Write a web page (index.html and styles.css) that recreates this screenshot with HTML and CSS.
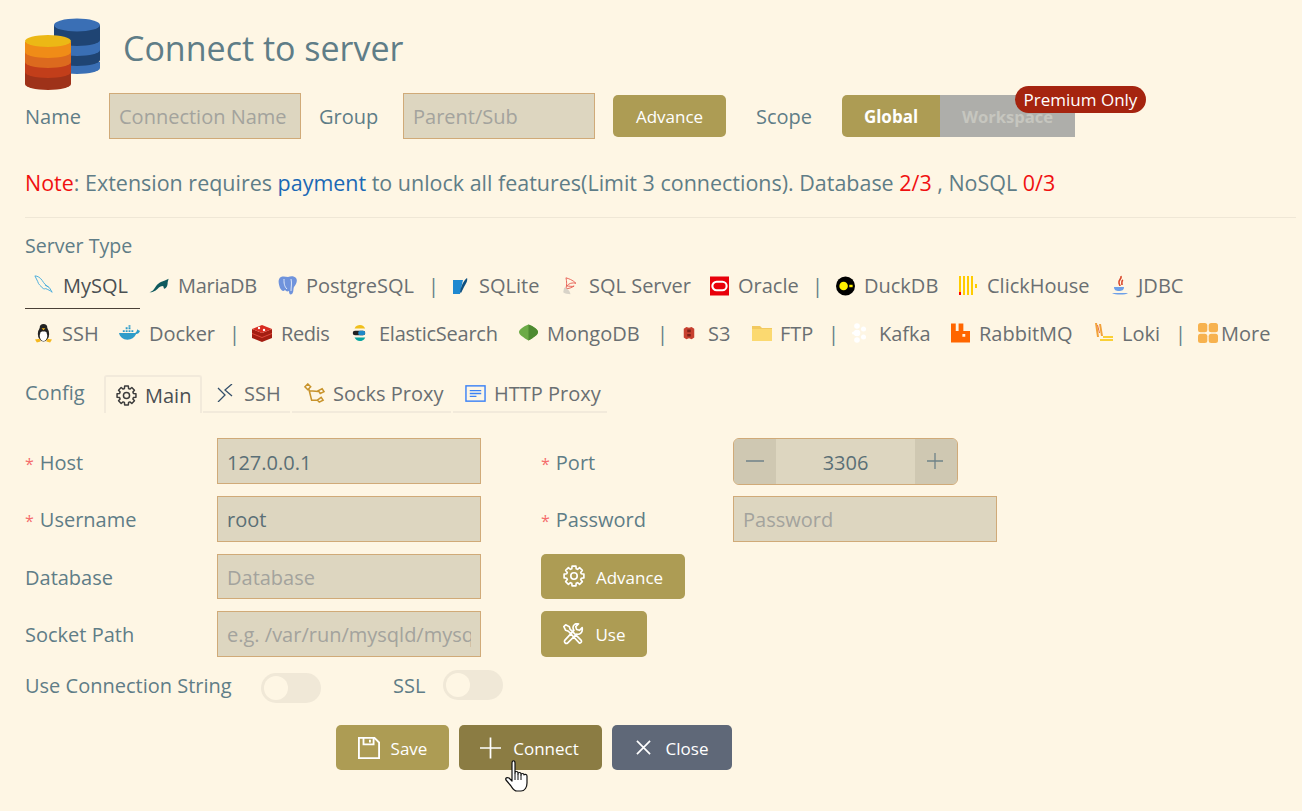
FILE: index.html
```html
<!DOCTYPE html>
<html lang="en">
<head>
<meta charset="utf-8">
<title>Connect to server</title>
<link rel="stylesheet" href="styles.css">
</head>
<body>
<main class="page">
  <header class="head">
    <svg class="logo" width="75" height="72" viewBox="0 0 75 72">
      <path fill="#3a6fb5" d="M29 44h46v6a23 6 0 0 1-46 0z"/>
      <path fill="#1f4473" d="M29 32h46v10a23 6 0 0 1-46 0z"/>
      <path fill="#3a6fb5" d="M29 22h46v10a23 6 0 0 1-46 0z"/>
      <path fill="#1f4473" d="M29 7h46v15a23 6 0 0 1-46 0z"/>
      <ellipse fill="#3a6fb5" cx="52" cy="7" rx="23" ry="6.5"/>
      <path fill="#9e3219" d="M0 54h46v12a23 6 0 0 1-46 0z"/>
      <path fill="#c23e1a" d="M0 44h46v10a23 6 0 0 1-46 0z"/>
      <path fill="#dc6a1e" d="M0 34h46v10a23 6 0 0 1-46 0z"/>
      <path fill="#f08c17" d="M0 24h46v10a23 6 0 0 1-46 0z"/>
      <ellipse fill="#ecb815" cx="23" cy="23" rx="23" ry="6"/>
    </svg>
    <h1 class="title">Connect to server</h1>
  </header>

  <div class="name-row">
    <label class="lbl lbl-name">Name</label>
    <input class="field field-top" placeholder="Connection Name">
    <label class="lbl lbl-group">Group</label>
    <input class="field field-top" placeholder="Parent/Sub">
    <button class="btn btn-top-adv">Advance</button>
    <span class="lbl lbl-scope">Scope</span>
    <div class="scope">
      <span class="seg seg-on">Global</span>
      <span class="seg seg-off">Workspace</span>
      <span class="badge">Premium Only</span>
    </div>
  </div>

  <p class="note"><span class="red">Note</span>: Extension requires <a class="pay">payment</a> to unlock all features(Limit 3 connections). Database <span class="red">2/3</span> , NoSQL <span class="red">0/3</span></p>
  <div class="rule"></div>
  <div class="section-label">Server Type</div>

  <nav class="types types-1">
    <a class="type type-active">
      <svg class="ti t22" viewBox="0 0 22 22"><path fill="none" stroke="#3fa9dc" stroke-width="1" d="M1 1c3 0 6 2 8 5 2 3 4 6 8 8l3 5c-2-2-5-3-7-4-1 0-2 1-4-1C7 11 5 11 4 7 3 5 2 3 1 1zM12 11l4 2"/></svg>MySQL</a>
    <a class="type w-maria"><svg class="ti t21" viewBox="0 0 22 22"><path fill="#0f5a5e" d="M0 18c3-1 4-2 6-5 3-5 7-7 11-8l4-2-1 4c0 3-1 7-4 7l-1-3c-3 0-4 1-6 3-3 3-6 4-9 4z"/></svg>MariaDB</a>
    <a class="type w-pg"><svg class="ti" viewBox="1 1 20 20"><path fill="#6f93dc" d="M4 2c3-1 5 0 7 0 3-1 6-1 8 1 2 3 0 6-2 9-1 2 0 5-2 7-2 1-3 0-3-3-2 1-3 0-4-1-2 2-3 1-5-2C2 10 0 4 4 2z"/><path fill="none" stroke="#dfe8f8" d="M7 4c0 4 0 7 3 10M14 4c1 4 0 8 0 12"/></svg>PostgreSQL</a>
    <span class="sep">|</span>
    <a class="type w-sqlite"><svg class="ti t16" viewBox="0 0 16 20"><path fill="#1f88d0" d="M1 4h10c-1 4-2 9-3 14H1z"/><path fill="#0d4f80" d="M15 2c1 2-1 6-3 9l-3 6-1-1c1-5 3-11 7-14z"/></svg>SQLite</a>
    <a class="type w-mssql"><svg class="ti t19" viewBox="0 0 20 22"><path fill="none" stroke="#e75a50" d="M5 2c3 1 7 2 11 6-4-1-8 0-10 3 3 0 6 1 8 0-3 2-6 3-9 3 1-4 1-8 0-12z"/><path fill="#d8d3c8" d="M3 13c3 0 6 3 7 7-3 0-6 0-8-2z"/></svg>SQL Server</a>
    <a class="type w-oracle"><svg class="ti t19" viewBox="0 0 20 20"><rect width="20" height="20" fill="#e8000b"/><rect x="2.500" y="5.500" width="15" height="9" rx="4.500" fill="none" stroke="#fff" stroke-width="2.200"/></svg>Oracle</a>
    <span class="sep">|</span>
    <a class="type w-duck"><svg class="ti t19" viewBox="0 0 20 20"><circle cx="10" cy="10" r="10" fill="#000"/><circle cx="8" cy="10" r="4.500" fill="#fff100"/><rect x="14" y="8.700" width="3.500" height="2.600" fill="#fff100"/></svg>DuckDB</a>
    <a class="type w-ch"><svg class="ti t20g9" viewBox="0 0 20 20"><path fill="#fc0" d="M1 0h2v19H1zM5 0h2v19H5zM9 0h2v19H9zM13 0h2v19h-2zM17 8h2v4h-2z"/><path fill="#f00" d="M1 16h2v3H1z"/></svg>ClickHouse</a>
    <a class="type w-jdbc"><svg class="ti t16g10" viewBox="0 0 16 22"><path fill="none" stroke="#d9472b" stroke-width="1.600" d="M9 1c1 3-3 4-2 7 0 1 1 2 1 3M11 5c-2 1-1 3-1 5"/><path fill="#6d9fe8" d="M2 12h10c0 3-2 4-5 4s-5-1-5-4zM0 18h16c-2 2-13 2-16 0z"/></svg>JDBC</a>
  </nav>

  <nav class="types types-2">
    <a class="type w-ssh"><svg class="ti t17" viewBox="0 0 18 20"><ellipse cx="9" cy="11" rx="6" ry="8" fill="#222"/><ellipse cx="9" cy="13" rx="4" ry="5.500" fill="#fff"/><circle cx="9" cy="4.500" r="4" fill="#222"/><path fill="#f5b81f" d="M7 5h4l-2 2zM0 17l5-1 1 3-4 1zM18 17l-5-1-1 3 4 1z"/></svg>SSH</a>
    <a class="type w-docker"><svg class="ti t21g9" viewBox="0 0 22 16"><path fill="#2d9cc9" d="M0 8h17c1-1 2-2 2-4 1 1 2 1 3 2-1 2-2 3-4 3-2 4-5 6-9 6-5 0-8-3-9-7z"/><path fill="#2d9cc9" d="M4 5h2v2H4zM7 5h2v2H7zM10 5h2v2h-2zM13 5h2v2h-2zM7 2h2v2H7zM10 2h2v2h-2zM10 0h2v1.500h-2z"/></svg>Docker</a>
    <span class="sep">|</span>
    <a class="type w-redis"><svg class="ti t20g9" viewBox="0 0 20 18"><path fill="#a41e11" d="M0 5l10 4 10-4v9l-10 4-10-4z"/><path fill="#d82c20" d="M0 5l10-4 10 4-10 4z"/><path fill="#e04a3c" d="M0 9l10 4 10-4v1l-10 4-10-4z"/><circle cx="7" cy="4" r="1.200" fill="#fff"/><circle cx="12" cy="6" r="1.200" fill="#fff"/></svg>Redis</a>
    <a class="type w-es"><svg class="ti t14g13" viewBox="0 0 14 18"><path fill="#f0bf1a" d="M2 4C3 1 6 0 8 0c3 0 5 2 6 4z"/><path fill="#07a5a0" d="M2 14h12c-1 3-4 4-6 4-3 0-5-2-6-4z"/><rect y="6.500" width="14" height="5" rx="2.500" fill="#222"/><rect x="6" y="6.500" width="8" height="5" rx="2.500" fill="#1e88c7"/></svg>ElasticSearch</a>
    <a class="type w-mongo"><svg class="ti t19g9" viewBox="0 0 20 20"><path fill="#6cab46" d="M10 1c5 2 10 5 10 8s-5 6-10 9C5 15 0 12 0 9s5-6 10-8z"/><path fill="#4d8a30" d="M10 1c5 2 10 5 10 8s-5 6-10 9z"/></svg>MongoDB</a>
    <span class="sep">|</span>
    <a class="type w-s3"><svg class="ti t14g12" viewBox="0 0 14 16"><path fill="#c7402f" d="M1 3l3-2 3 1 3-1 3 2v10l-3 2-3-1-3 1-3-2z"/><path fill="#7e2118" d="M5 4h4v3H5zM5 9h4v3H5z"/></svg>S3</a>
    <a class="type w-ftp"><svg class="ti" viewBox="0 0 20 16"><path fill="#f2c95f" d="M0 1h8l2 2h10v13H0z"/><path fill="#fbd970" d="M0 4h20v12H0z"/></svg>FTP</a>
    <span class="sep">|</span>
    <a class="type w-kafka"><svg class="ti t-kafka" viewBox="0 0 14 20"><g fill="#fff"><circle cx="5" cy="3" r="2.800"/><circle cx="5" cy="10" r="3.300"/><circle cx="5" cy="17" r="2.800"/><circle cx="11.500" cy="6" r="2.500"/><circle cx="11.500" cy="14" r="2.500"/><circle cx="1.500" cy="10" r="1.500"/></g></svg>Kafka</a>
    <a class="type w-rabbit"><svg class="ti t19g9" viewBox="0 0 20 20"><path fill="#f60" fill-rule="evenodd" d="M0 0h5v8h3V0h5v8h7v12H0zM12 11v3h3v-3z"/></svg>RabbitMQ</a>
    <a class="type w-loki"><svg class="ti t18g9" viewBox="0 0 18 20"><path fill="#f2a23a" d="M0 0l2 0 2 14H2zM4 1l2 0 2 12H6z"/><path fill="#e96f3d" d="M2 2l1 0 2 8H4z"/><path fill="#fad035" d="M5 16h13v2H5zM8 13h10v2H8z"/></svg>Loki</a>
    <span class="sep">|</span>
    <a class="type w-more"><svg class="ti t20g3" viewBox="0 0 20 20"><g fill="#f7b24e"><rect width="9.300" height="9.300" rx="2.500"/><rect x="10.700" width="9.300" height="9.300" rx="2.500"/><rect y="10.700" width="9.300" height="9.300" rx="2.500"/><rect x="10.700" y="10.700" width="9.300" height="9.300" rx="2.500"/></g></svg>More</a>
  </nav>

  <div class="config-row">
    <span class="lbl lbl-config">Config</span>
    <div class="tabs">
      <a class="tab tab-main"><svg class="tab-ico" viewBox="0 0 24 24" fill="none" stroke="#3c3c3c" stroke-width="1.700" stroke-linejoin="round"><use href="#gear"/></svg>Main</a>
      <a class="tab tab-ssh"><svg class="tab-ico ico-ssh" viewBox="0 0 16 18" fill="none" stroke="#35506b" stroke-width="1.300"><path d="M1 4l7 7-7 7M15 0L8 6l7 6"/></svg>SSH</a>
      <a class="tab tab-socks"><svg class="tab-ico" viewBox="0 0 22 22" fill="none" stroke="#c8932b" stroke-width="1.600"><path d="M1 4l3-3 3 3-3 3zM15 8l4-2 2 3-4 2zM14 18l4-3 2 3-4 2zM5 6l3 12h6M6 8l9 1"/></svg>Socks Proxy</a>
      <a class="tab tab-http"><svg class="tab-ico" viewBox="0 0 22 18" fill="none" stroke="#3b82f6" stroke-width="1.500"><rect x="1" y="1" width="20" height="16"/><path d="M5 6h12M5 9h12M5 12h7"/></svg>HTTP Proxy</a>
    </div>
  </div>

  <svg class="defs" width="0" height="0"><defs>
    <g id="gear"><circle cx="12" cy="12" r="3.500"/><path d="M22.800 9.900V14.100L19.900 14.400 19.300 15.900 21.100 18.100 18.100 21.100 15.900 19.300 14.400 19.900 14.100 22.800H9.900L9.600 19.900 8.100 19.300 5.900 21.100 2.900 18.100 4.700 15.900 4.100 14.400 1.200 14.100V9.900L4.100 9.600 4.700 8.100 2.900 5.900 5.900 2.900 8.100 4.700 9.600 4.100 9.900 1.200H14.100L14.400 4.100 15.900 4.700 18.100 2.900 21.100 5.900 19.300 8.100 19.900 9.600z"/></g>
  </defs></svg>

  <form class="form">
    <div class="cell-l"><label class="fl"><span class="star">*</span>Host</label><input class="field field-form val" value="127.0.0.1"></div>
    <div class="cell-r"><label class="fr"><span class="star">*</span>Port</label>
      <div class="stepper"><span class="step"><svg width="18" height="18" viewBox="0 0 18 18"><path d="M0 9h18" stroke="#6f8288" stroke-width="1.300"/></svg></span><span class="step-val">3306</span><span class="step"><svg width="18" height="18" viewBox="0 0 18 18"><path d="M0 9h16M8 1v16" stroke="#6f8288" stroke-width="1.300"/></svg></span></div>
    </div>
    <div class="cell-l"><label class="fl"><span class="star">*</span>Username</label><input class="field field-form val" value="root"></div>
    <div class="cell-r"><label class="fr"><span class="star">*</span>Password</label><input class="field field-form" placeholder="Password"></div>
    <div class="cell-l"><label class="fl">Database</label><input class="field field-form" placeholder="Database"></div>
    <div class="cell-r"><button type="button" class="btn btn-ico btn-adv"><svg class="btn-svg" viewBox="0 0 24 24" fill="none" stroke="#fff" stroke-width="1.800" stroke-linejoin="round"><use href="#gear"/></svg><span class="btn-t">Advance</span></button></div>
    <div class="cell-l"><label class="fl">Socket Path</label><input class="field field-form" placeholder="e.g. /var/run/mysqld/mysqld.sock"></div>
    <div class="cell-r"><button type="button" class="btn btn-ico btn-use"><svg class="btn-svg" viewBox="0 0 24 24" fill="none" stroke="#fff" stroke-width="1.800" stroke-linejoin="round"><path d="M2 4l2-2 4 2 1 3 12 12c1 2-1 3-2 3L7 9 4 8zM22 5l-3 3-3-1-1-3 3-3c-3-1-6 1-6 4 0 1 0 2 1 3L3 19c-1 2 1 4 3 3l10-10c3 1 7-1 6-7z"/></svg><span class="btn-t">Use</span></button></div>
  </form>

  <div class="switch-row">
    <span class="lbl lbl-conn">Use Connection String</span>
    <span class="switch sw-a"><i class="knob"></i></span>
    <span class="lbl lbl-ssl">SSL</span>
    <span class="switch sw-b"><i class="knob"></i></span>
  </div>

  <div class="actions">
    <button class="btn btn-ico btn-save"><svg class="act-svg" viewBox="0 0 24 24" fill="none" stroke="#fff" stroke-width="2"><path d="M1 1h17l5 5v17H1zM6 1v7h11V1M13 3v3"/></svg><span class="btn-t">Save</span></button>
    <button class="btn btn-ico btn-connect"><svg class="act-svg plus" viewBox="0 0 22 22" fill="none" stroke="#fff" stroke-width="1.800"><path d="M0 11h22M11 0v22"/></svg><span class="btn-t">Connect</span></button>
    <button class="btn btn-ico btn-close"><svg class="act-svg cross" viewBox="0 0 16 16" fill="none" stroke="#fff" stroke-width="1.800"><path d="M1 1l14 14M15 1L1 15"/></svg><span class="btn-t">Close</span></button>
    <svg class="cursor" width="26" height="34" viewBox="0 0 26 34"><path fill="#fff" stroke="#111" stroke-width="1.200" stroke-linejoin="round" d="M7 3c0-3 3-3 3 0v10c0-2 3-2 3 0v1c0-2 3-2 3 0v1c0-2 3-2 3 0 0-1 3-1 3 1v7c0 4-2 8-6 8h-4c-3 0-4-2-6-5l-5-6c-1-2 1-3 3-2l3 3z"/><path stroke="#111" d="M10 13v7M13 14v6M16 15v5"/></svg>
  </div>
</main>
</body>
</html>
```
FILE: styles.css
```css
* { box-sizing: border-box; }
html, body { margin: 0; padding: 0; background: #fef6e4; }
body { font-family: "Open Sans", "Noto Sans", sans-serif; font-size: 20px; color: #5f7d87; height: 811px; overflow: hidden; }
.page { padding: 18px 6px 0 25px; }
.defs { position: absolute; }

.head { display: flex; align-items: center; height: 72px; }
.logo { flex: none; }
.title { margin: 0 0 12px 23px; font-size: 34px; font-weight: 400; color: #5f7d87; line-height: 40px; }

.name-row { display: flex; align-items: center; height: 46px; margin-top: 3px; }
.lbl { color: #5f7d87; white-space: nowrap; }
.lbl-name { width: 84px; }
.lbl-group { width: 84px; margin-left: 18px; }
.lbl-scope { width: 86px; margin-left: 30px; }
.field { background: #ddd6c0; border: 1px solid #d0aa78; border-radius: 0; font: inherit; color: #5f7d87; padding: 0 9px; height: 46px; outline: none; }
.field::placeholder { color: #a3a39d; opacity: 1; }
.field-top { width: 192px; }
.btn { border: 0; background: #ad9c54; color: #fff; font: inherit; font-size: 17px; border-radius: 5px; cursor: pointer; white-space: nowrap; display: inline-flex; align-items: center; justify-content: center; padding: 0; }
.btn-top-adv { width: 113px; height: 42px; margin-left: 18px; }
.btn-t { padding-top: 2px; }

.scope { display: flex; height: 42px; position: relative; font-size: 16.600px; font-weight: 700; }
.seg { display: flex; align-items: center; justify-content: center; }
.seg-on { width: 98px; background: #ad9c54; color: #fff; border-radius: 5px 0 0 5px; font-size: 17px; }
.seg-off { width: 135px; background: #aeaeaa; color: #c6c6bf; }
.badge { position: absolute; left: 173px; top: -9px; width: 131px; height: 27px; border-radius: 14px; background: #a5240f; color: #fff; font-size: 17px; font-weight: 400; display: flex; align-items: center; justify-content: center; white-space: nowrap; }

.note { margin: 29px 0 0; line-height: 30px; white-space: nowrap; font-size: 21.480px; }
.red { color: #f01010; }
.pay { color: #1a68b5; }
.rule { height: 1px; background: #efe7d6; margin-top: 19px; }
.section-label { margin-top: 15px; line-height: 26px; font-size: 19.600px; }

.types { display: flex; align-items: center; white-space: nowrap; color: #6a6f72; }
.types-1 { height: 44px; margin-top: 6px; }
.types-1 .type { padding-bottom: 3px; }
.types-1 .sep { margin-bottom: 4px; }
.types-2 { height: 40px; margin-top: 4px; }
.type { display: flex; align-items: center; height: 100%; padding-left: 8px; flex: none; overflow: visible; }
.type-active { color: #4a4f52; border-bottom: 1px solid #4a4036; width: 115px; margin-right: 1px; }
.w-maria { width: 129px; letter-spacing: -0.3px; }
.w-pg { width: 156px; }
.w-sqlite { width: 109px; }
.w-mssql { width: 149px; }
.w-oracle { width: 108px; }
.w-duck { width: 122px; }
.w-ch { width: 154px; }
.w-jdbc { width: 100px; }
.w-ssh { width: 84px; margin-left: 2px; }
.w-docker { width: 116px; }
.w-redis { width: 99px; padding-left: 7px; letter-spacing: -0.4px; }
.w-es { width: 167px; letter-spacing: -0.25px; }
.w-mongo { width: 144px; }
.w-s3 { width: 71px; padding-left: 9px; }
.w-ftp { width: 82px; }
.w-kafka { width: 99px; padding-left: 8px; }
.w-rabbit { width: 144px; }
.w-loki { width: 86px; }
.w-more { width: 90px; padding-left: 7px; }
.ti { width: 20px; height: 20px; margin-right: 8px; flex: none; }
.t22 { width: 22px; }
.t21 { width: 21px; }
.t19 { width: 19px; margin-right: 9px; }
.t17 { width: 17px; margin-right: 10px; }
.t16 { width: 16px; margin-right: 11px; }
.t16g10 { width: 16px; height: 22px; margin-right: 10px; }
.t20g9 { margin-right: 9px; }
.t21g9 { width: 21px; margin-right: 9px; }
.t19g9 { width: 19px; margin-right: 9px; }
.t18g9 { width: 18px; margin-right: 9px; }
.t14g13 { width: 14px; height: 16px; margin-right: 13px; }
.t14g12 { width: 14px; height: 14px; margin-right: 12px; }
.t-kafka { width: 14px; height: 20px; margin-right: 13px; }
.t20g3 { margin-right: 3px; }
.sep { color: #5f7d87; width: 15px; text-align: center; margin-right: 3px; flex: none; }

.config-row { display: flex; align-items: center; margin-top: 21px; height: 40px; }
.lbl-config { width: 79px; margin-top: -4px; }
.tabs { display: flex; height: 38px; }
.tab { display: flex; align-items: center; padding: 0 9px; color: #6a6f72; border-bottom: 2px solid #f2eadb; margin-right: 2px; white-space: nowrap; }
.tab-main { width: 98px; color: #4a4f52; border: 2px solid #f2eadb; border-bottom: 0; border-radius: 3px 3px 0 0; margin-right: 1px; padding-left: 10px; }
.tab-ssh { width: 87px; padding-left: 14px; }
.tab-socks { width: 159px; padding-left: 12px; }
.tab-http { width: 154px; padding-left: 12px; }
.tab-ico { width: 21px; height: 21px; margin-right: 8px; flex: none; }
.ico-ssh { width: 16px; height: 18px; margin: 0 11px 0 0; }

.form { display: grid; grid-template-columns: 516px 1fr; grid-auto-rows: 45.670px; row-gap: 12px; margin-top: 24.200px; }
.cell-l, .cell-r { display: flex; align-items: center; }
.fl, .fr { width: 192px; padding-top: 2px; }
.star { color: #f56c6c; margin-right: 6px; font-size: 16px; }
.field-form { width: 264px; height: 100%; padding-top: 2px; }
.val { color: #5a6f76; }
.stepper { width: 225px; height: 47px; display: flex; background: #ddd6c0; border: 1px solid #d0aa78; border-radius: 6px; overflow: hidden; color: #5a6f76; }
.step { width: 42px; background: #cfc8b2; display: flex; align-items: center; justify-content: center; }
.step-val { flex: 1; display: flex; align-items: center; justify-content: center; padding-top: 2px; }
.btn-ico { height: 100%; }
.btn-adv { width: 144px; }
.btn-use { width: 106px; }
.btn-svg { width: 22px; height: 22px; margin-right: 11px; }

.switch-row { display: flex; align-items: center; height: 30px; margin-top: 13.500px; }
.lbl-conn { width: 236px; }
.lbl-ssl { width: 50px; margin-left: 72px; }
.switch { width: 60px; height: 30px; border-radius: 15px; background: #f0e8d7; padding: 3px; }
.sw-a { margin-top: 6px; }
.sw-b { margin-top: 0; }
.knob { display: block; width: 24px; height: 24px; border-radius: 50%; background: #fef6e4; }

.actions { display: flex; gap: 10px; margin: 25px 0 0 311px; height: 45px; position: relative; }
.btn-save { width: 113px; }
.btn-connect { width: 143px; background: #8b7c43; }
.btn-close { width: 120px; background: #5f6878; }
.act-svg { width: 22px; height: 22px; margin-right: 11px; }
.plus { width: 21px; margin-right: 12px; margin-left: -2px; }
.cross { width: 15px; height: 15px; margin-right: 15px; }
.cursor { position: absolute; left: 169px; top: 35px; }
```
